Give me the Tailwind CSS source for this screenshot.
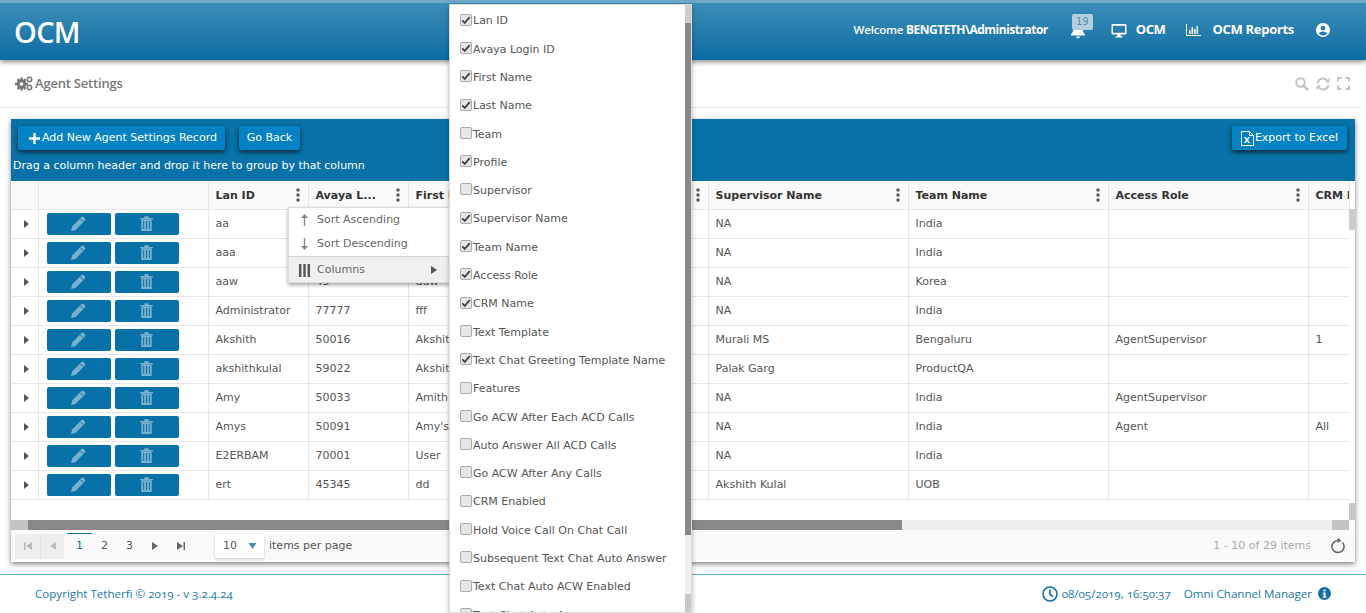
<!DOCTYPE html>
<html lang="en">
<head>
    <meta charset="UTF-8">
    <title>Agent Settings - OCM</title>
    <script src="https://cdn.jsdelivr.net/npm/@tailwindcss/browser@4"></script>
</head>
<body class="relative h-[613px] w-[1366px] overflow-hidden bg-white font-['DejaVu_Sans',sans-serif] text-[11px] text-[#555]">

    <!-- top bar -->
    <header class="h-[60px] border-t-[3px] border-[#6ea9c9] bg-gradient-to-b from-[#3a8db6] to-[#086da4] shadow-[0_2px_5px_rgba(0,0,0,0.45)] flex items-center justify-between pl-[14px] pr-[36px] text-white font-['Open_Sans',sans-serif] relative">
        <div class="text-[29px] font-semibold leading-none tracking-[-0.7px]">OCM</div>
        <div class="flex items-center mb-[3px]">
            <span class="text-[11.500px] font-semibold mr-[23px] tracking-[-0.2px]">Welcome <span class="font-bold text-[12px] tracking-[-0.5px]">BENGTETH\Administrator</span></span>
            <span class="relative w-[14px] h-[16px] mr-[26px] mt-[1px]">
                <svg viewBox="0 0 14 16" class="w-[14px] h-[16px]" fill="#fff"><path d="M7 0c-3 0-4.500 2-4.500 5 0 3-1 5-2.500 6.500v1h14v-1C12.500 10 11.500 8 11.500 5 11.500 2 10 0 7 0zM5 13.500h4c0 1-1 1.800-2 1.800s-2-.8-2-1.800z"/></svg>
                <span class="absolute left-[1px] top-[-9px] w-[21px] h-[16px] rounded-[2px] bg-[#b4cfdf] text-[#5b8fb0] text-[10px] leading-[16px] text-center font-['DejaVu_Sans',sans-serif]">19</span>
            </span>
            <span class="flex items-center mr-[21px] text-[13px] font-bold tracking-[-0.4px]">
                <svg viewBox="0 0 16 15" class="w-[16px] h-[15px] mr-[9px]"><path d="M1.500 1h13a1 1 0 0 1 1 1v8.500a1 1 0 0 1-1 1h-13a1 1 0 0 1-1-1V2a1 1 0 0 1 1-1zm.5 1.700v7h12v-7zM6.500 11.500h3l.4 1.800h1.600v1.200h-7v-1.200h1.600z" fill="#fff" fill-rule="evenodd"/></svg>
                OCM
            </span>
            <span class="flex items-center mr-[22px] text-[13px] font-bold tracking-[-0.3px]">
                <svg viewBox="0 0 15 12" class="w-[15px] h-[12px] mr-[11px]" fill="#fff"><path d="M0 0h1v11h14v1H0zM3 6h1.500v4H3zM5.500 3H7v7H5.500zM8 5h1.500v5H8zM10.500 2H12v8h-1.500z"/></svg>
                OCM Reports
            </span>
            <svg viewBox="0 0 14 14" class="w-[14px] h-[14px]"><path fill="#fff" fill-rule="evenodd" d="M7 0a7 7 0 1 1 0 14A7 7 0 0 1 7 0zm0 2.800a2.400 2.400 0 1 0 0 4.800 2.400 2.400 0 0 0 0-4.800zM2.900 10.800A5.400 5.400 0 0 0 7 12.500a5.400 5.400 0 0 0 4.100-1.700C10.700 9.500 9 8.600 7 8.600s-3.700.9-4.100 2.200z"/></svg>
        </div>
    </header>

    <!-- page title -->
    <div class="h-[48px] w-[1361px] border-b border-[#e6e6e6] flex items-center justify-between pl-[15px] pr-[11px]">
        <div class="flex items-center text-[13px] font-semibold text-[#777] font-['Open_Sans',sans-serif] tracking-[-0.2px]">
            <svg viewBox="0 0 18 15" class="w-[18px] h-[15px] mr-[2px]" fill="#777"><circle cx="6.500" cy="8" r="4.800"/><path d="M5.300 1.500h2.400v13H5.300zM0 6.800h13v2.400H0zM1.600 3.900l1.700-1.700 8 10-1.700 1.700zM9.700 2.200l1.700 1.700-8 10-1.700-1.700z"/><circle cx="6.500" cy="8" r="1.800" fill="#fff"/><circle cx="14.500" cy="3.500" r="2.200" fill="none" stroke="#777" stroke-width="1.500"/><circle cx="14.500" cy="11.500" r="2.200" fill="none" stroke="#777" stroke-width="1.500"/></svg>
            Agent Settings
        </div>
        <div class="flex items-center gap-[7px]">
            <svg viewBox="0 0 14 14" class="w-[14px] h-[14px]" fill="none" stroke="#c4c4c4" stroke-width="2"><circle cx="5.500" cy="5.500" r="4.300"/><path d="M8.700 8.700l4.500 4.500" stroke-width="2.600"/></svg>
            <svg viewBox="0 0 14 14" class="w-[14px] h-[14px]" fill="none" stroke="#c4c4c4" stroke-width="2"><path d="M1.500 6a5.500 5.500 0 0 1 10-2M12.500 8a5.500 5.500 0 0 1-10 2"/><path d="M13.500 .8v4.700H8.800zM.5 13.200V8.500h4.700z" fill="#c4c4c4" stroke="none"/></svg>
            <svg viewBox="0 0 13 13" class="w-[13px] h-[13px]" fill="none" stroke="#c4c4c4" stroke-width="2"><path d="M1 4.500V1h3.500M8.500 1H12v3.500M12 8.500V12H8.500M4.500 12H1V8.500"/></svg>
        </div>
    </div>

    <!-- grid panel -->
    <section class="relative ml-[11px] mt-[11px] w-[1344px] h-[443px] flex flex-col bg-white shadow-[0_2px_5px_rgba(0,0,0,0.5)]">
        <div class="h-[62px] bg-[#0872a8] text-white px-[2px] shrink-0">
            <div class="flex items-start justify-between pt-[7px] pl-[5px] pr-[6px]">
                <div class="flex gap-[14px]">
                    <button class="h-[24px] w-[207px] rounded-[2px] bg-[#0582c4] shadow-[0_2px_5px_rgba(0,0,0,0.7)] flex items-center pl-[11px] gap-[2px]">
                        <svg viewBox="0 0 11 11" class="w-[11px] h-[11px]" fill="#fff"><path d="M4.300 0h2.400v4.300H11v2.400H6.700V11H4.300V6.700H0V4.300h4.300z"/></svg>
                        Add New Agent Settings Record
                    </button>
                    <button class="h-[24px] w-[61px] rounded-[2px] bg-[#0582c4] shadow-[0_2px_5px_rgba(0,0,0,0.7)]">Go Back</button>
                </div>
                <button class="h-[24px] w-[115px] rounded-[2px] bg-[#0582c4] shadow-[0_2px_5px_rgba(0,0,0,0.7)] flex items-center justify-center gap-[1px]">
                    <svg viewBox="0 0 13 15" class="w-[13px] h-[15px]"><path d="M.5.500h8l4 4v10H.5z" fill="none" stroke="#fff"/><path d="M8.500.5v4h4" fill="none" stroke="#fff"/><path d="M3 6h1.800l1.200 2 1.200-2H9L7 9l2 3H7.200L6 10l-1.200 2H3l2-3z" fill="#fff"/></svg>
                    Export to Excel
                </button>
            </div>
            <div class="mt-[9px] leading-[14px] text-[11px]">Drag a column header and drop it here to group by that column</div>
        </div>

        <div class="relative flex-1 overflow-hidden">
            <table class="table-fixed w-[1338px] border-collapse text-left">
                <colgroup>
                    <col class="w-[27px]"><col class="w-[170px]"><col class="w-[100px]"><col class="w-[100px]"><col class="w-[100px]"><col class="w-[100px]"><col class="w-[100px]"><col class="w-[200px]"><col class="w-[200px]"><col class="w-[200px]"><col class="w-[41px]">
                </colgroup>
                <thead id="gridHead"></thead>
                <tbody id="gridBody"></tbody>
            </table>
            <!-- vertical scrollbar -->
            <div class="absolute right-0 top-[28px] w-[6px] h-[311px] bg-white">
                <div class="h-[21px] bg-[#cccccc]"></div>
                <div class="absolute bottom-0 w-full h-[17px] bg-[#c8c8c8]"></div>
            </div>
            <!-- horizontal scrollbar -->
            <div class="absolute left-0 bottom-0 w-[1338px] h-[10px] bg-[#eeeeee] flex">
                <div class="w-[17px] bg-[#c4c4c4]"></div>
                <div class="w-[874px] bg-[#888888]"></div>
                <div class="flex-1"></div>
                <div class="w-[17px] bg-[#c4c4c4]"></div>
            </div>
        </div>

        <!-- pager -->
        <div class="h-[32px] shrink-0 bg-[#fafafa] flex items-center pl-[4px] pr-[9px] text-[#555]">
            <span class="w-[25px] h-[25px] bg-[#eeeeee] flex items-center justify-center"><svg viewBox="0 0 8 8" class="w-[8px] h-[8px]" fill="#bbb"><path d="M0 0h1.500v8H0zM8 0v8L2 4z"/></svg></span>
            <span class="w-[24px] h-[25px] bg-[#eeeeee] border-l border-[#e2e2e2] flex items-center justify-center"><svg viewBox="0 0 6 8" class="w-[6px] h-[8px]" fill="#bbb"><path d="M6 0v8L0 4z"/></svg></span>
            <span class="w-[25px] h-[26px] ml-[3px] border-t border-[#0872a8] text-[#0872a8] flex items-center justify-center">1</span>
            <span class="w-[25px] text-center">2</span>
            <span class="w-[25px] text-center">3</span>
            <span class="w-[26px] flex justify-center"><svg viewBox="0 0 6 8" class="w-[6px] h-[8px]" fill="#666"><path d="M0 0v8l6-4z"/></svg></span>
            <span class="w-[26px] flex justify-center"><svg viewBox="0 0 8 8" class="w-[8px] h-[8px]" fill="#666"><path d="M8 0H6.500v8H8zM0 0v8l6-4z"/></svg></span>
            <span class="ml-[21px] w-[49px] h-[24px] bg-white shadow-[0_1px_3px_rgba(0,0,0,0.2)] rounded-[2px] flex items-center justify-between pl-[8px] pr-[7px]">10<svg viewBox="0 0 8 6" class="w-[9px] h-[6px]" fill="#3f8fbf"><path d="M0 0h8L4 6z"/></svg></span>
            <span class="ml-[5px]">items per page</span>
            <span class="ml-auto text-[#aaa]">1 - 10 of 29 items</span>
            <svg viewBox="0 0 16 16" class="w-[16px] h-[16px] ml-[19px]" fill="none" stroke="#666" stroke-width="1.600"><path d="M12.500 4.500a6 6 0 1 1-4.500-2"/><path d="M7.500 0l4 2.500-4 2.500z" fill="#666" stroke="none"/></svg>
        </div>
    </section>

    <!-- footer -->
    <footer class="mt-[12px] h-[39px] border-t border-[#5aaed0] flex items-center justify-between pl-[35px] pr-[35px] text-[#1a78a8] font-['Open_Sans',sans-serif] text-[11.600px] oldstyle-nums">
        <span>Copyright Tetherfi © 2019 - v 3.2.4.24</span>
        <span class="flex items-center">
            <svg viewBox="0 0 16 16" class="w-[16px] h-[16px] mr-[4px]" fill="none" stroke="#0f6ea3" stroke-width="1.600"><circle cx="8" cy="8" r="7"/><path d="M8 3.500V8.500l3 2"/></svg>
            08/05/2019, 16:50:37
            <span class="ml-[13px]">Omni Channel Manager</span>
            <svg viewBox="0 0 12 12" class="w-[13px] h-[13px] ml-[6px]"><circle cx="6" cy="6" r="6" fill="#0f6ea3"/><path d="M5 2.300h2v1.600H5zM4.500 5h2.500v3.800h.7V10H4.500V8.800h.7V6.200h-.7z" fill="#fff"/></svg>
        </span>
    </footer>

    <!-- column menu -->
    <div class="absolute left-[288px] top-[207px] w-[162px] h-[76px] bg-[#fafafa] border border-[#dcdcdc] shadow-[0_2px_4px_rgba(0,0,0,0.35)] text-[#666]">
        <div class="h-[24px] flex items-center bg-white">
            <svg viewBox="0 0 7 12" class="w-[7px] h-[12px] ml-[12px] mr-[9px]" fill="#888"><path d="M3.500 0L7 4H4.200v8H2.800V4H0z"/></svg>Sort Ascending
        </div>
        <div class="h-[24px] flex items-center bg-white">
            <svg viewBox="0 0 7 12" class="w-[7px] h-[12px] ml-[12px] mr-[9px]" fill="#888"><path d="M3.500 12L7 8H4.200V0H2.800v8H0z"/></svg>Sort Descending
        </div>
        <div class="h-[26px] flex items-center bg-[#f0f0f0] border-t border-[#d4d4d4] pt-[1px]">
            <svg viewBox="0 0 11 13" class="w-[11px] h-[13px] ml-[10px] mr-[7px]" fill="#555"><path d="M0 0h2.400v13H0zM4.300 0h2.400v13H4.300zM8.600 0H11v13H8.600z"/></svg>Columns
            <svg viewBox="0 0 6 8" class="w-[6px] h-[8px] ml-auto mr-[12px]" fill="#555"><path d="M0 0v8l6-4z"/></svg>
        </div>
    </div>

    <!-- column chooser popup -->
    <div class="absolute left-[449px] top-[4px] w-[243px] h-[609px] bg-white border border-[#dddddd] shadow-[0_2px_5px_rgba(0,0,0,0.3)] overflow-hidden">
        <div id="columnList" class="pl-[10px] pt-[2.500px]"></div>
        <div class="absolute right-0 top-0 w-[6px] h-full bg-[#eeeeee]">
            <div class="h-[18px] bg-[#cccccc]"></div>
            <div class="h-[512px] bg-[#888888]"></div>
            <div class="absolute bottom-0 w-full h-[18px] bg-[#c8c8c8]"></div>
        </div>
    </div>

    <script>
    const headers = ['', '', 'Lan ID', 'Avaya L...', 'First Name', 'Last Name', 'Profile', 'Supervisor Name', 'Team Name', 'Access Role', 'CRM Name'];
    const rows = [
        ['aa', '43', 'aa', 'NA', 'India', '', ''],
        ['aaa', '44', 'aaa', 'NA', 'India', '', ''],
        ['aaw', '45', 'ddw', 'NA', 'Korea', '', ''],
        ['Administrator', '77777', 'fff', 'NA', 'India', '', ''],
        ['Akshith', '50016', 'Akshith', 'Murali MS', 'Bengaluru', 'AgentSupervisor', '1'],
        ['akshithkulal', '59022', 'Akshith', 'Palak Garg', 'ProductQA', '', ''],
        ['Amy', '50033', 'Amith', 'NA', 'India', 'AgentSupervisor', ''],
        ['Amys', '50091', "Amy's", 'NA', 'India', 'Agent', 'All'],
        ['E2ERBAM', '70001', 'User', 'NA', 'India', '', ''],
        ['ert', '45345', 'dd', 'Akshith Kulal', 'UOB', '', '']
    ];
    const columns = [
        ['Lan ID', 1], ['Avaya Login ID', 1], ['First Name', 1], ['Last Name', 1], ['Team', 0], ['Profile', 1],
        ['Supervisor', 0], ['Supervisor Name', 1], ['Team Name', 1], ['Access Role', 1], ['CRM Name', 1],
        ['Text Template', 0], ['Text Chat Greeting Template Name', 1], ['Features', 0],
        ['Go ACW After Each ACD Calls', 0], ['Auto Answer All ACD Calls', 0], ['Go ACW After Any Calls', 0],
        ['CRM Enabled', 0], ['Hold Voice Call On Chat Call', 0], ['Subsequent Text Chat Auto Answer', 0],
        ['Text Chat Auto ACW Enabled', 0], ['Text Chat Auto Answer', 0]
    ];

    const kebab = '<svg viewBox="0 0 4 14" class="absolute right-[8px] top-[7px] w-[4px] h-[14px]" fill="#555"><circle cx="2" cy="2" r="1.700"/><circle cx="2" cy="7" r="1.700"/><circle cx="2" cy="12" r="1.700"/></svg>';
    const pencil = '<svg viewBox="0 0 15 15" class="w-[15px] h-[15px]"><path d="M0 15l1.100-4.500L10.500 1.100a1.500 1.500 0 0 1 2.100 0l1.300 1.300a1.500 1.500 0 0 1 0 2.100L4.500 13.900z" fill="#79b0cf"/><path d="M9.200 2.600l3.200 3.200" stroke="#0872a8"/></svg>';
    const trash = '<svg viewBox="0 0 13 15" class="w-[13px] h-[15px]"><path d="M0 2h13v1.300H0zM4.300 .3h4.400V2H4.300z" fill="#79b0cf"/><path d="M1.300 3.300h10.400V15H1.300z" fill="#79b0cf"/><path d="M3.700 5v8M6.500 5v8M9.300 5v8" stroke="#0872a8"/></svg>';

    document.getElementById('gridHead').innerHTML = '<tr class="h-[28px] bg-[#fafafa]">' + headers.map((h, i) =>
        `<th class="relative border-r border-b border-[#e6e6e6] pl-[7px] pt-[3px] font-bold text-[11px] text-[#333] whitespace-nowrap overflow-hidden">${h}${i > 1 && i < 10 ? kebab : ''}</th>`
    ).join('') + '</tr>';

    document.getElementById('gridBody').innerHTML = rows.map(r => {
        const [lan, avaya, first, sup, team, role, crm] = r;
        const cells = [lan, avaya, first, '', '', sup, team, role, crm];
        return `<tr class="h-[29px]">
            <td class="border-r border-b border-[#e6e6e6] pt-[1px]"><svg viewBox="0 0 5 8" class="w-[5px] h-[8px] ml-[13px]" fill="#555"><path d="M0 0v8l5-4z"/></svg></td>
            <td class="border-r border-b border-[#e6e6e6]"><div class="flex gap-[4px] pl-[8px]">
                <span class="w-[64px] h-[22px] rounded-[2px] bg-[#0872a8] flex items-center justify-center">${pencil}</span>
                <span class="w-[64px] h-[22px] rounded-[2px] bg-[#0872a8] flex items-center justify-center">${trash}</span>
            </div></td>
            ${cells.map(c => `<td class="border-r border-b border-[#e6e6e6] pl-[7px] pt-[1px] whitespace-nowrap overflow-hidden">${c}</td>`).join('')}
        </tr>`;
    }).join('');

    const tick = '<svg viewBox="0 0 12 12" class="w-[10px] h-[10px]" fill="none" stroke="#444" stroke-width="2.200"><path d="M1.500 6.500l3 3 6-7"/></svg>';
    document.getElementById('columnList').innerHTML = columns.map(([name, on]) =>
        `<div class="h-[28.300px] flex items-center whitespace-nowrap">
            <span class="w-[12px] h-[12px] mb-[4px] mr-[1px] shrink-0 rounded-[2px] border border-[#aaaaaa] bg-[#e6e6e6] flex items-center justify-center">${on ? tick : ''}</span>${name}
        </div>`
    ).join('');
    </script>
</body>
</html>
